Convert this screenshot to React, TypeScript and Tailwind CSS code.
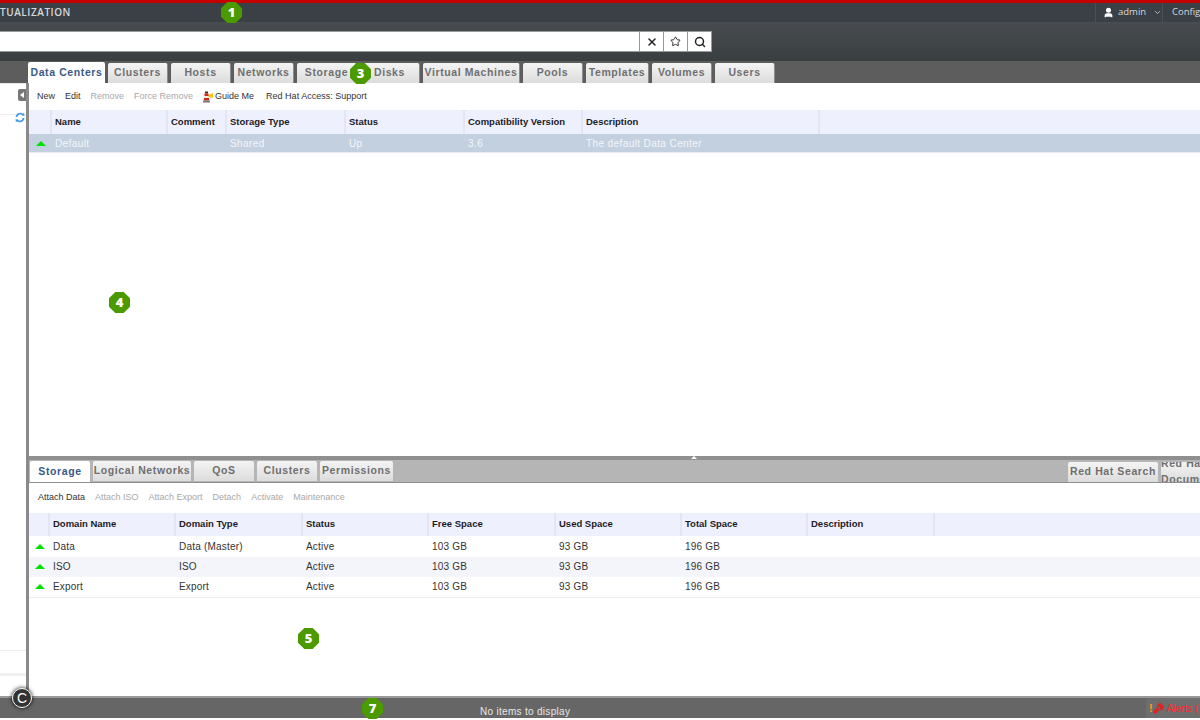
import { ChevronDown, Search, Star, User, Wrench, X } from 'lucide-react';

const mainTabs = [
  { label: 'Data Centers', w: 'w-[77px]' },
  { label: 'Clusters', w: 'w-[60px]' },
  { label: 'Hosts', w: 'w-[60px]' },
  { label: 'Networks', w: 'w-[60px]' },
  { label: 'Storage', w: 'w-[60px]' },
  { label: 'Disks', w: 'w-[60px]' },
  { label: 'Virtual Machines', w: 'w-[97px]' },
  { label: 'Pools', w: 'w-[60px]' },
  { label: 'Templates', w: 'w-[63px]' },
  { label: 'Volumes', w: 'w-[60px]' },
  { label: 'Users', w: 'w-[60px]' },
];

const subTabs = [
  { label: 'Storage', w: 'w-[60px]' },
  { label: 'Logical Networks', w: 'w-[98px]' },
  { label: 'QoS', w: 'w-[60px]' },
  { label: 'Clusters', w: 'w-[60px]' },
  { label: 'Permissions', w: 'w-[73px]' },
];

const topColumns = [
  { label: 'Name', w: 'w-[116px]' },
  { label: 'Comment', w: 'w-[59px]' },
  { label: 'Storage Type', w: 'w-[119px]' },
  { label: 'Status', w: 'w-[119px]' },
  { label: 'Compatibility Version', w: 'w-[118px]' },
  { label: 'Description', w: 'w-[237px]' },
];

const topRow = ['Default', '', 'Shared', 'Up', '3.6', 'The default Data Center'];

const bottomColumns = [
  { label: 'Domain Name', w: 'w-[126px]' },
  { label: 'Domain Type', w: 'w-[127px]' },
  { label: 'Status', w: 'w-[126px]' },
  { label: 'Free Space', w: 'w-[127px]' },
  { label: 'Used Space', w: 'w-[126px]' },
  { label: 'Total Space', w: 'w-[126px]' },
  { label: 'Description', w: 'w-[127px]' },
];

const domains = [
  ['Data', 'Data (Master)', 'Active', '103 GB', '93 GB', '196 GB', ''],
  ['ISO', 'ISO', 'Active', '103 GB', '93 GB', '196 GB', ''],
  ['Export', 'Export', 'Active', '103 GB', '93 GB', '196 GB', ''],
];

function Callout({ n, className }: { n: number; className: string }) {
  return (
    <div
      className={`absolute flex h-[21px] w-[21px] items-center justify-center bg-[#4a9a00] font-['Open_Sans',sans-serif] text-[13px] font-extrabold text-white [clip-path:polygon(30%_0,70%_0,100%_30%,100%_70%,70%_100%,30%_100%,0_70%,0_30%)] ${className}`}
    >
      {n}
    </div>
  );
}

function Tab({ label, w, active, light }: { label: string; w: string; active?: boolean; light?: boolean }) {
  return (
    <div
      className={`flex h-[20px] shrink-0 items-center justify-center rounded-t-[2px] text-[10.5px] font-bold tracking-[0.6px] ${w} ${
        active
          ? 'h-[21px] bg-white text-[#3a5a86]'
          : `bg-gradient-to-b from-[#f4f4f4] to-[#dcdcdc] text-[#6f6f6f] ${light ? '' : 'border-r border-r-[#8c8c8c]'}`
      }`}
    >
      {label}
    </div>
  );
}

function Up() {
  return <div className="h-0 w-0 border-x-[5px] border-b-[5px] border-x-transparent border-b-[#00e000]" />;
}

function HeaderRow({ columns, first, h, last }: { columns: { label: string; w: string }[]; first: string; h: string; last?: boolean }) {
  return (
    <div className={`flex shrink-0 bg-[#eef0fd] ${h}`}>
      <div className={`shrink-0 border-r-2 border-r-[#e3e5f4] ${first}`} />
      {columns.map((c) => (
        <div
          key={c.label}
          className={`flex shrink-0 items-center border-r-2 border-r-[#e3e5f4] pl-[3px] text-[9.5px] font-bold text-[#1c1c28] ${c.w}`}
        >
          {c.label}
        </div>
      ))}
      {last && <div className="flex-1" />}
    </div>
  );
}

function Lighthouse() {
  return (
    <svg width="11" height="12" viewBox="0 0 11 12" className="shrink-0">
      <path d="M5 4 L10 2 L10 7 L5 6 Z" fill="#f5c518" />
      <rect x="2" y="0.5" width="3" height="2" fill="#333" />
      <rect x="1.5" y="2.5" width="4" height="2.5" fill="#d8281e" />
      <rect x="1.5" y="5" width="4" height="2" fill="#f4f0e8" />
      <rect x="1" y="7" width="5" height="2.5" fill="#d8281e" />
      <rect x="0" y="9.5" width="7" height="2" fill="#777" />
    </svg>
  );
}

export default function App() {
  return (
    <div className="relative flex h-[720px] w-[1200px] flex-col overflow-hidden bg-white font-['Liberation_Sans',Arial,sans-serif]">
      <div className="h-[3px] shrink-0 bg-[#c40000]" />

      {/* masthead */}
      <div className="flex h-[19px] shrink-0 items-center justify-between bg-[#3b4047] font-['Open_Sans',sans-serif] text-[#d6d8da]">
        <span className="text-[10px] font-semibold tracking-[0.55px]">TUALIZATION</span>
        <div className="flex h-full w-[105px] shrink-0 items-center">
          <div className="flex h-full w-[68px] shrink-0 items-center gap-[4px] border-x border-x-[#4b5057] pl-[7px] text-[9.5px]">
            <User size={11} strokeWidth={3} className="shrink-0 fill-white text-white" />
            <span>admin</span>
            <ChevronDown size={9} className="ml-[3px] shrink-0" />
          </div>
          <span className="ml-[9px] text-[9.5px]">Configure</span>
        </div>
      </div>

      {/* search */}
      <div className="flex h-[39px] shrink-0 items-center bg-gradient-to-b from-[#484c50] to-[#393f41]">
        <div className="flex h-[21px] w-[712px] shrink-0 border border-[#9a9a9a] border-l-0 bg-white">
          <div className="flex-1" />
          <div className="flex w-[24px] items-center justify-center border-l border-l-[#999]"><X size={12} strokeWidth={3} className="text-[#222]" /></div>
          <div className="flex w-[24px] items-center justify-center border-l border-l-[#999]"><Star size={11} strokeWidth={2} className="text-[#222]" /></div>
          <div className="flex w-[24px] items-center justify-center border-l border-l-[#999]"><Search size={12} strokeWidth={3} className="text-[#222]" /></div>
        </div>
      </div>

      {/* main tabs */}
      <div className="flex h-[22px] shrink-0 items-end gap-[3px] bg-[#5d5d5d] pl-[28px]">
        {mainTabs.map((t, i) => (
          <Tab key={t.label} label={t.label} w={t.w} active={i === 0} />
        ))}
      </div>

      <div className="flex min-h-0 flex-1">
        {/* collapsed tree */}
        <div className="relative flex w-[26px] shrink-0 flex-col border-t border-t-[#e8e8e8] bg-white">
          <div className="h-[31px] shrink-0 border-b border-b-[#ececec]" />
          <svg width="10" height="11" viewBox="0 0 10 11" className="ml-[15px] mt-[-3px] shrink-0">
            <path d="M1.5 5 A3.6 3.6 0 0 1 8 3 M8.5 6 A3.6 3.6 0 0 1 2 8" fill="none" stroke="#3f9be8" strokeWidth="1.7" />
            <path d="M6.5 3.5 L9.5 3.8 L9 .8 Z M3.5 7.5 L.5 7.2 L1 10.2 Z" fill="#3f9be8" />
          </svg>
          <div className="flex-1" />
          <div className="mb-[22px] h-[1px] shrink-0 bg-[#ececec]" />
          <div className="mb-[20px] h-[3px] shrink-0 bg-[#f0f0f0]" />
        </div>

        {/* splitter */}
        <div className="relative w-[3px] shrink-0 bg-[#8a8a8a]">
          <div className="absolute left-[-8px] top-[6px] flex h-[12px] w-[8px] items-center justify-center rounded-l-[2px] bg-[#777]">
            <div className="h-0 w-0 border-y-[3px] border-r-[4px] border-y-transparent border-r-white" />
          </div>
        </div>

        <div className="flex min-w-0 flex-1 flex-col bg-white">
          {/* top pane */}
          <div className="flex h-[373px] shrink-0 flex-col">
            <div className="flex h-[27px] shrink-0 items-center pl-[8px] text-[9px] text-[#333]">
              <span>New</span>
              <span className="ml-[10px]">Edit</span>
              <span className="ml-[10px] text-[#a8a8a8]">Remove</span>
              <span className="ml-[10px] text-[#a8a8a8]">Force Remove</span>
              <span className="ml-[10px] mr-[1px]"><Lighthouse /></span>
              <span>Guide Me</span>
              <span className="ml-[12px]">Red Hat Access: Support</span>
            </div>
            <HeaderRow columns={topColumns} first="w-[23px]" h="h-[24px]" last />
            <div className="flex h-[19px] shrink-0 items-center border-b border-b-[#e8ebf2] bg-[#c2d0e0] text-[10px] tracking-[0.4px] text-[#f4f6f9]">
              <div className="flex w-[23px] shrink-0 items-center justify-center"><Up /></div>
              {topRow.map((cell, i) => (
                <div key={i} className={`shrink-0 pl-[3px] ${topColumns[i].w}`}>{cell}</div>
              ))}
            </div>
          </div>

          <div className="relative h-[4px] shrink-0 bg-[#8f8f8f]">
            <div className="absolute left-[662px] top-0 h-0 w-0 border-x-[3px] border-b-[3px] border-x-transparent border-b-white" />
          </div>

          {/* sub tabs */}
          <div className="flex h-[22px] shrink-0 items-end justify-between bg-[#b5b5b5] pl-[1px]">
            <div className="flex gap-[3px]">
              {subTabs.map((t, i) => (
                <Tab key={t.label} label={t.label} w={t.w} active={i === 0} light />
              ))}
            </div>
            <div className="flex w-[132px] shrink-0 gap-[3px] overflow-hidden">
              <Tab label="Red Hat Search" w="w-[90px]" light />
              <Tab label="Red Hat Documentation" w="w-[130px]" light />
            </div>
          </div>
          <div className="h-px shrink-0 bg-[#8f8f8f]" />

          {/* bottom pane */}
          <div className="flex min-h-0 flex-1 flex-col">
            <div className="flex h-[30px] shrink-0 items-center gap-[10px] pl-[9px] text-[9px] text-[#a8a8a8]">
              <span className="text-[#333]">Attach Data</span>
              <span>Attach ISO</span>
              <span>Attach Export</span>
              <span>Detach</span>
              <span>Activate</span>
              <span>Maintenance</span>
            </div>
            <HeaderRow columns={bottomColumns} first="w-[21px]" h="h-[23px]" last />
            {domains.map((row, r) => (
              <div
                key={row[0]}
                className={`flex h-[20.5px] shrink-0 items-center text-[10px] tracking-[0.2px] text-[#333] ${
                  r === 1 ? 'bg-[#f3f5fb]' : 'bg-white'
                } ${r === 2 ? 'border-b border-b-[#ececec]' : ''}`}
              >
                <div className="flex w-[21px] shrink-0 items-center justify-center"><Up /></div>
                {row.map((cell, i) => (
                  <div key={i} className={`shrink-0 pl-[3px] ${bottomColumns[i].w}`}>{cell}</div>
                ))}
              </div>
            ))}
          </div>
        </div>
      </div>

      {/* footer */}
      <div className="flex h-[22px] shrink-0 items-center border-t-2 border-t-[#999] bg-[#666]">
        <div className="flex-1 pl-[480px] pt-[6px] text-[10px] tracking-[0.3px] text-[#e6e6e6]">No items to display</div>
        <div className="flex h-full w-[54px] shrink-0 items-center rounded-tl-[3px] bg-[#6e6e6e] pl-[3px] text-[10px] text-[#ff2a2a]">
          <span className="text-[11px] font-bold leading-none text-[#ff9a1f]">!</span>
          <Wrench size={11} strokeWidth={3} className="mr-[3px] text-[#f01818]" />
          <span className="whitespace-nowrap">Alerts (</span>
        </div>
      </div>
      <div className="h-[2px] shrink-0 bg-white" />

      <Callout n={1} className="left-[221px] top-[2px]" />
      <Callout n={3} className="left-[350px] top-[63px]" />
      <Callout n={4} className="left-[109px] top-[292px]" />
      <Callout n={5} className="left-[298px] top-[628px]" />
      <Callout n={7} className="left-[362px] top-[698px]" />

      <div className="absolute left-[12px] top-[688px] flex h-[20px] w-[20px] items-center justify-center rounded-full border border-white bg-[#333] text-[14px] leading-none text-white shadow-[0_0_4px_#000]">
        C
      </div>
    </div>
  );
}
